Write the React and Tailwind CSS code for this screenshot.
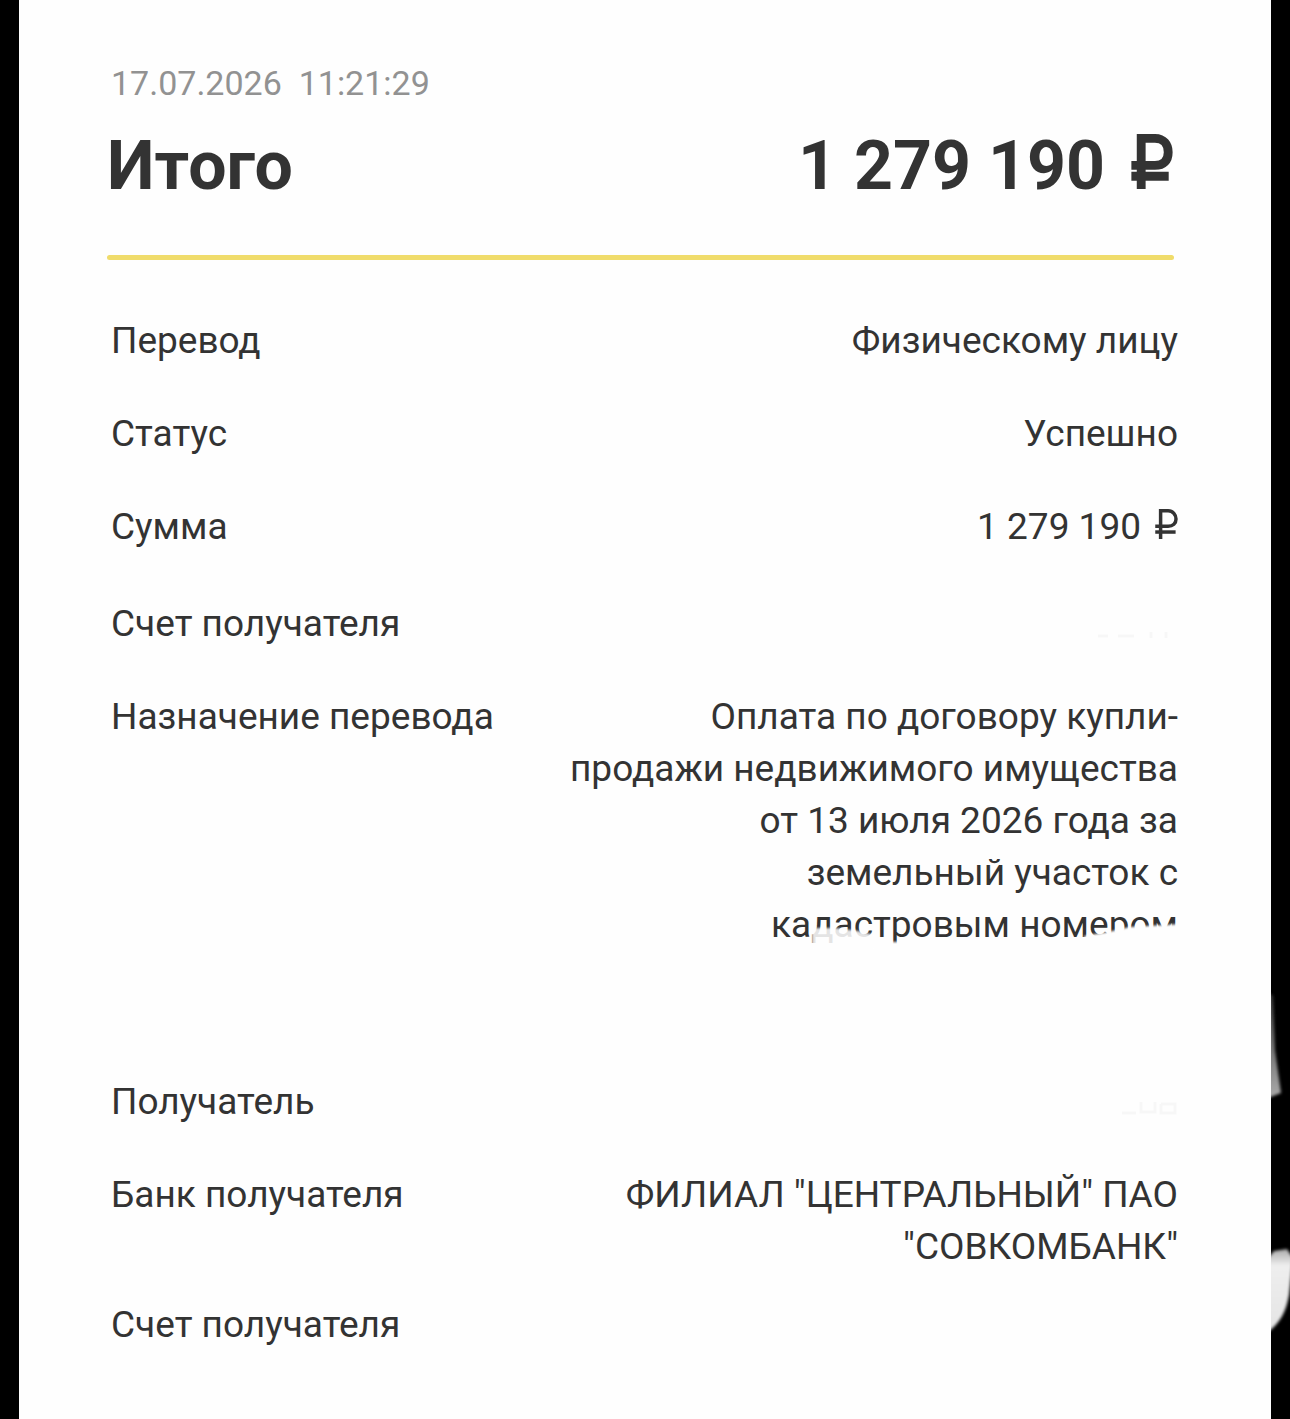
import React from "react";

const rows = [
  { label: "Перевод", lines: ["Физическому лицу"], gap: "mb-[41px]" },
  { label: "Статус", lines: ["Успешно"], gap: "mb-[41px]" },
  { label: "Сумма", lines: ["1 279 190"], currency: true, gap: "mb-[45px]" },
  { label: "Счет получателя", lines: [], trace: "account", gap: "mb-[41px]" },
  {
    label: "Назначение перевода",
    lines: [
      "Оплата по договору купли-",
      "продажи недвижимого имущества",
      "от 13 июля 2026 года за",
      "земельный участок с",
      "кадастровым номером",
    ],
    erased: true,
    gap: "mb-[125px]",
  },
  { label: "Получатель", lines: [], trace: "name", gap: "mb-[41px]" },
  { label: "Банк получателя", lines: ['ФИЛИАЛ "ЦЕНТРАЛЬНЫЙ" ПАО', '"СОВКОМБАНК"'], gap: "mb-[26px]" },
  { label: "Счет получателя", lines: [], gap: "mb-0" },
];

function Ruble({ className, weight }) {
  return (
    <svg className={className} viewBox="0 0 42 56" fill="none" stroke="currentColor" strokeWidth={weight} role="img" aria-label="рублей">
      <path d={`M10 56V${weight / 2}H24C33 ${weight / 2} ${42 - weight / 2} 11 ${42 - weight / 2} 18.500C${42 - weight / 2} 27 33 32 24 32H0`} />
      <path d="M0 43H38" />
    </svg>
  );
}

function EraseMarks() {
  return (
    <svg className="absolute bottom-0 right-0 h-[52px] w-[400px]" viewBox="0 0 400 52" fill="#fefefe" aria-hidden="true">
      <defs>
        <filter id="soft" x="-10%" y="-50%" width="120%" height="200%">
          <feGaussianBlur stdDeviation="1.2" />
        </filter>
      </defs>
      <g filter="url(#soft)">
        <path d="M34 29H58L80 32L97 36V50H34Z" opacity="0.87" />
        <path d="M112 43H138V56H112Z" />
        <path d="M306 37L330 33L352 28L404 25V56H310Z" />
      </g>
    </svg>
  );
}

function Trace({ kind }) {
  return (
    <svg className="h-[52px] w-[110px]" viewBox="0 0 110 52" fill="none" stroke="#f7f7f7" strokeWidth="3" aria-hidden="true">
      {kind === "account" ? (
        <path d="M30 38H40M50 38H66M83 34V40M98 34V40" />
      ) : (
        <path d="M54 37H68M73 26V36H87V26M93 28H107V37H93V28" />
      )}
    </svg>
  );
}

function Row({ row }) {
  return (
    <div className={`flex items-start justify-between gap-8 ${row.gap}`}>
      <dt className="shrink-0">{row.label}</dt>
      <dd className="relative text-right">
        {row.lines.map((line) => (
          <span key={line} className="block whitespace-nowrap">
            {line}
            {row.currency && <Ruble weight={6.5} className="ml-[14px] inline-block h-[30px] w-[23px] align-baseline" />}
          </span>
        ))}
        {row.trace && <Trace kind={row.trace} />}
        {row.erased && <EraseMarks />}
      </dd>
    </div>
  );
}

function EdgeMarks() {
  return (
    <svg className="absolute right-0 top-[980px] h-[360px] w-[19px]" viewBox="0 0 19 360" aria-hidden="true">
      <defs>
        <filter id="edge" x="-50%" y="-10%" width="200%" height="120%">
          <feGaussianBlur stdDeviation="1.5" />
        </filter>
        <linearGradient id="fade" x1="0" y1="0" x2="0" y2="1">
          <stop offset="0" stopColor="#333" />
          <stop offset="0.7" stopColor="#888" />
          <stop offset="1" stopColor="#aaa" />
        </linearGradient>
        <linearGradient id="glow" x1="0" y1="0" x2="0" y2="1">
          <stop offset="0" stopColor="#aaa" />
          <stop offset="0.2" stopColor="#eee" />
          <stop offset="1" stopColor="#e4e4e4" />
        </linearGradient>
      </defs>
      <path d="M-3 12L2 16L4 70L10 113L-3 118Z" fill="url(#fade)" filter="url(#edge)" />
      <path d="M-3 278L3 271L16 269L22 278L18 315C15 332 9 343 -3 352Z" fill="url(#glow)" filter="url(#edge)" />
    </svg>
  );
}

export default function App() {
  return (
    <div className="relative min-h-screen bg-black px-[19px]">
      <main className="min-h-screen bg-[#fefefe] pb-[60px] pl-[92px] pr-[93px] pt-[59px] font-['Roboto',sans-serif] text-[37px] leading-[52px] text-[#333]">
        <time className="block whitespace-pre text-[34px] leading-[48px] text-[#929292]" dateTime="2026-07-17T11:21:29">17.07.2026  11:21:29</time>
        <div className="mt-[19px] flex items-center justify-between pr-[5px] text-[68px] font-bold leading-[80px]">
          <h1 className="-ml-1">Итого</h1>
          <p className="whitespace-nowrap">
            1 279 190
            <Ruble weight={9} className="ml-[26px] inline-block h-[55px] w-[42px] align-baseline" />
          </p>
        </div>
        <hr className="-ml-1 mb-[55px] mr-[4px] mt-[49px] h-[5px] rounded-sm border-0 bg-[#f0dc6b]" />
        <dl>
          {rows.map((row, i) => (
            <Row key={i} row={row} />
          ))}
        </dl>
      </main>
      <EdgeMarks />
    </div>
  );
}
